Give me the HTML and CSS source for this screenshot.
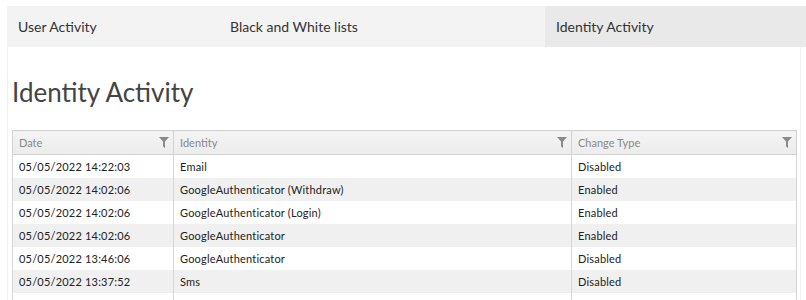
FILE: index.html
```html
<!DOCTYPE html>
<html lang="en">

<head>
    <meta charset="UTF-8" />
    <title>Identity Activity</title>
    <link rel="stylesheet" href="styles.css">
</head>

<body>
    <div class="page">
        <div class="tabs">
            <div class="tab tab-user">User Activity</div>
            <div class="tab tab-lists">Black and White lists</div>
            <div class="tab tab-identity active">Identity Activity</div>
        </div>
        <div class="content">
            <h1>Identity Activity</h1>
            <table class="grid">
                <thead>
                    <tr>
                        <th class="col-date"><span>Date</span><svg class="filter" viewBox="0 0 10 11"><path d="M0 0H10L6 4.5V11L4 9.5V4.5Z" /></svg></th>
                        <th class="col-identity"><span>Identity</span><svg class="filter" viewBox="0 0 10 11"><path d="M0 0H10L6 4.5V11L4 9.5V4.5Z" /></svg></th>
                        <th class="col-type"><span>Change Type</span><svg class="filter" viewBox="0 0 10 11"><path d="M0 0H10L6 4.5V11L4 9.5V4.5Z" /></svg></th>
                    </tr>
                </thead>
                <tbody>
                    <tr><td>05/05/2022 14:22:03</td><td>Email</td><td>Disabled</td></tr>
                    <tr><td>05/05/2022 14:02:06</td><td>GoogleAuthenticator (Withdraw)</td><td>Enabled</td></tr>
                    <tr><td>05/05/2022 14:02:06</td><td>GoogleAuthenticator (Login)</td><td>Enabled</td></tr>
                    <tr><td>05/05/2022 14:02:06</td><td>GoogleAuthenticator</td><td>Enabled</td></tr>
                    <tr><td>05/05/2022 13:46:06</td><td>GoogleAuthenticator</td><td>Disabled</td></tr>
                    <tr><td>05/05/2022 13:37:52</td><td>Sms</td><td>Disabled</td></tr>
                    <tr class="blank"><td></td><td></td><td></td></tr>
                </tbody>
            </table>
        </div>
    </div>
</body>

</html>
```

FILE: styles.css
```css
* {
    margin: 0;
    padding: 0;
    box-sizing: border-box;
}

body {
    font-family: "Lato", "Liberation Sans", sans-serif;
    background-color: #fff;
    color: #333;
    overflow: hidden;
}

.page {
    padding: 6px 0 0 7px;
}

.tabs {
    display: flex;
    height: 41px;
    background-color: #f3f3f3;
}

.tab {
    padding: 0 11px;
    font-size: 14px;
    line-height: 41px;
    color: #333;
}

.tab-user {
    width: 212px;
}

.tab-lists {
    width: 326px;
}

.tab-identity {
    flex: 1;
}

.tab.active {
    background-color: #e9e9e9;
}

.content {
    margin-right: 5px;
    border-left: 1px solid #f0f0f0;
    border-right: 1px solid #f0f0f0;
    padding: 29px 3px 0 4px;
    height: 260px;
}

h1 {
    font-size: 26px;
    font-weight: 400;
    color: #444;
    margin-bottom: 22px;
    line-height: 32px;
}

.grid {
    width: 100%;
    border-collapse: collapse;
    font-size: 11px;
    color: #222;
    border-left: 1px solid #d6d6d6;
    border-right: 1px solid #d6d6d6;
}

.grid th {
    height: 24px;
    text-align: left;
    font-weight: 400;
    color: #888;
    padding: 0 6px;
    background: linear-gradient(#f4f4f4, #ececec);
    border: 1px solid #d2d2d2;
    position: relative;
}

.col-date {
    width: 161px;
}

.col-identity {
    width: 398px;
}

.filter {
    position: absolute;
    right: 4px;
    top: 6px;
    width: 10px;
    height: 11px;
    fill: #8a8a8a;
}

.grid td {
    height: 23px;
    padding: 0 6px;
    letter-spacing: 0.2px;
    border-left: 1px solid #d6d6d6;
    border-right: 1px solid #d6d6d6;
}

.grid tbody tr:nth-child(even) td {
    background-color: #f0f0f0;
}

.grid tbody tr.blank td {
    background-color: #fff;
}
```
